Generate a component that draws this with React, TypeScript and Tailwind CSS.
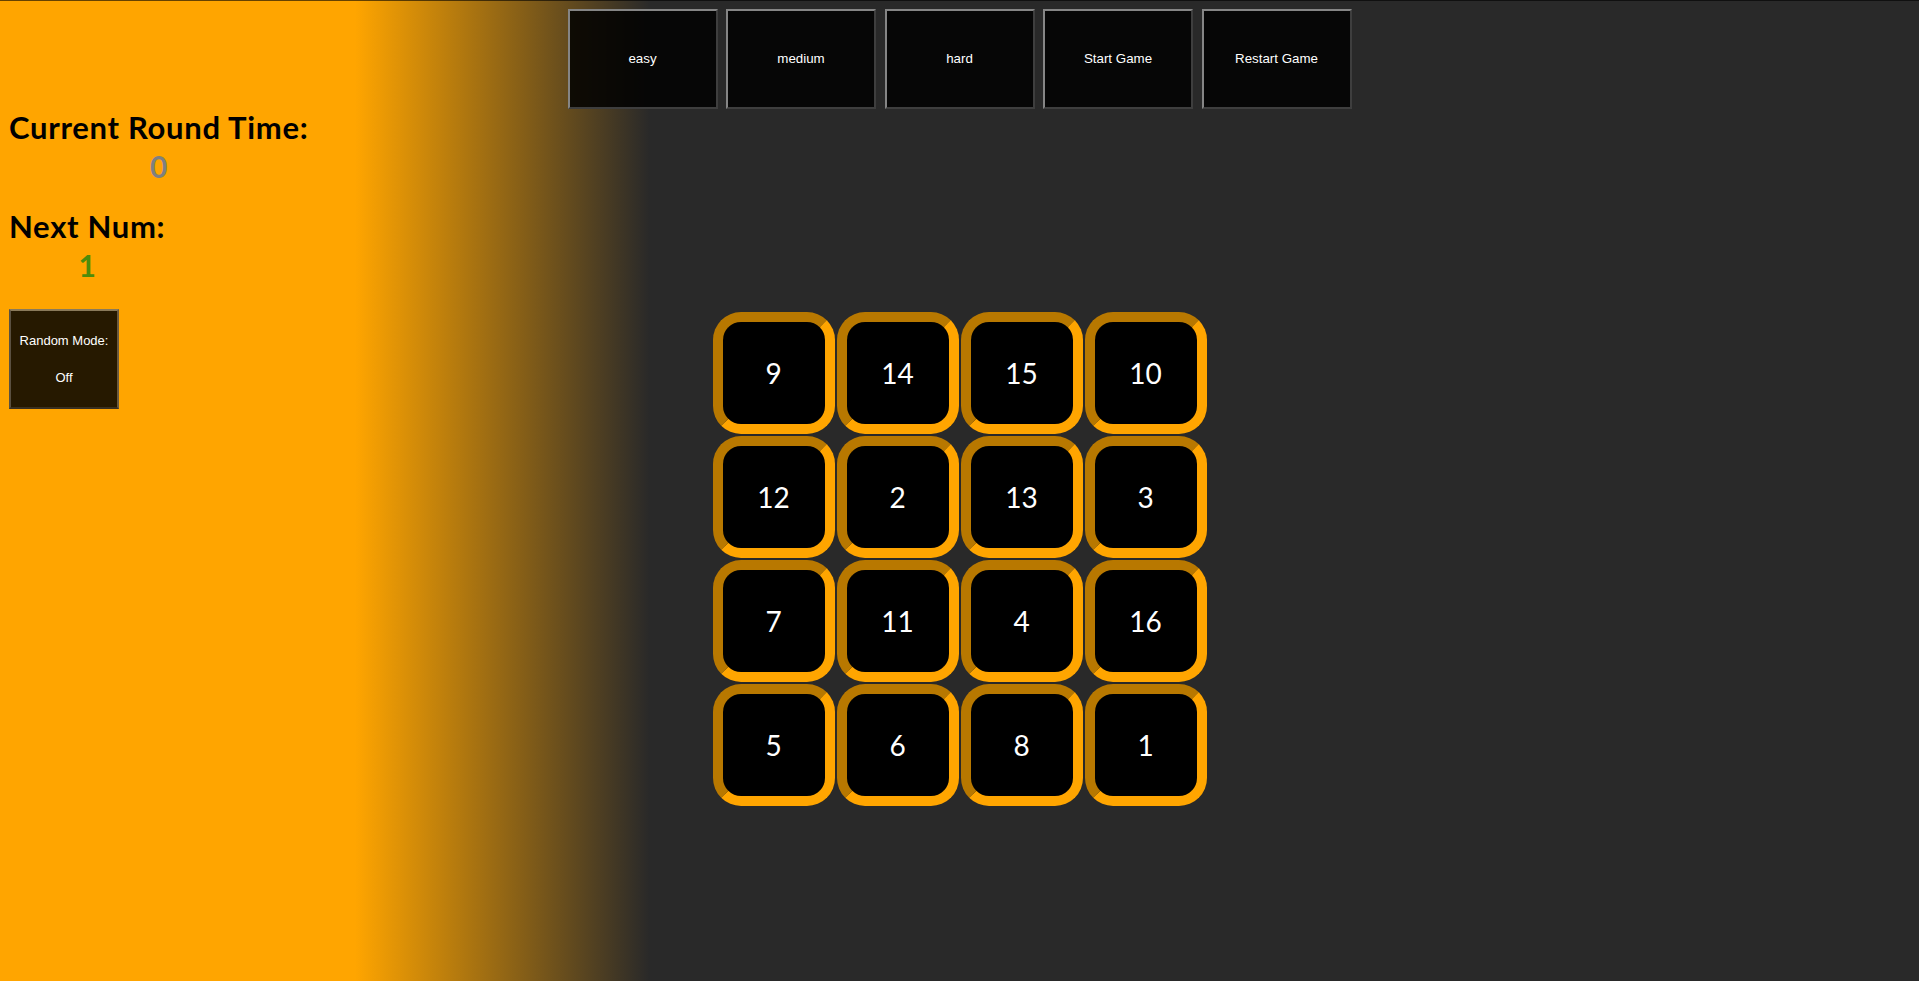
import type { ReactElement } from 'react';

const LEVELS = ['easy', 'medium', 'hard', 'Start Game', 'Restart Game'];
const TILES = [9, 14, 15, 10, 12, 2, 13, 3, 7, 11, 4, 16, 5, 6, 8, 1];

const headingFont = { fontFamily: 'Lato, "Open Sans", sans-serif' };
const buttonFont = { fontFamily: '"Liberation Sans", Arial, sans-serif' };

function StatBlock({ label, value, valueClass }: { label: string; value: string; valueClass: string }): ReactElement {
  return (
    <div className="w-fit text-center">
      <h2 className="text-[31px] font-bold leading-[35px] tracking-[0.7px] text-black">{label}</h2>
      <div className={`mt-[4px] text-[30px] font-bold leading-[35px] ${valueClass}`}>{value}</div>
    </div>
  );
}

export default function App(): ReactElement {
  return (
    <div
      className="grid min-h-screen w-full grid-cols-[1fr_auto_1fr] border-t border-black/60 bg-[linear-gradient(to_right,#ffa500_355px,#292929_650px)]"
      style={headingFont}
    >
      {/* left stats panel */}
      <aside className="flex flex-col items-start pl-[9px] pt-[109px]">
        <StatBlock label="Current Round Time:" value="0" valueClass="text-[#808080]" />
        <div className="mt-[25px]">
          <StatBlock label="Next Num:" value="1" valueClass="text-[#4d8c0a]" />
        </div>
        <button
          type="button"
          className="mt-[26px] flex h-[100px] w-[110px] flex-col items-center justify-center gap-[22px] border-2 border-t-[#8a7a5a] border-l-[#5a5040] border-r-[#6a5a40] border-b-[#3a3020] bg-black/85 text-[13px] leading-[15px] text-white"
          style={buttonFont}
        >
          <span>Random Mode:</span>
          <span>Off</span>
        </button>
      </aside>

      <main className="flex flex-col items-center pt-[8px]">
        <div className="flex gap-[8.5px]">
          {LEVELS.map((label) => (
            <button
              key={label}
              type="button"
              className="flex h-[100px] w-[150px] items-center justify-center border-2 border-t-[#858585] border-l-[#858585] border-r-[#3e3e3e] border-b-[#3e3e3e] bg-black/85 text-[13.33px] text-white"
              style={buttonFont}
            >
              {label}
            </button>
          ))}
        </div>

        <div className="mt-[203px] grid grid-cols-4 gap-[2px]">
          {TILES.map((n) => (
            <div
              key={n}
              className="flex h-[122px] w-[122px] items-center justify-center rounded-[28px] border-[10px] border-t-[#b87800] border-l-[#b87800] border-r-[#ffa500] border-b-[#ffa500] bg-black text-[28px] text-white"
            >
              {n}
            </div>
          ))}
        </div>
      </main>

      <div />
    </div>
  );
}
